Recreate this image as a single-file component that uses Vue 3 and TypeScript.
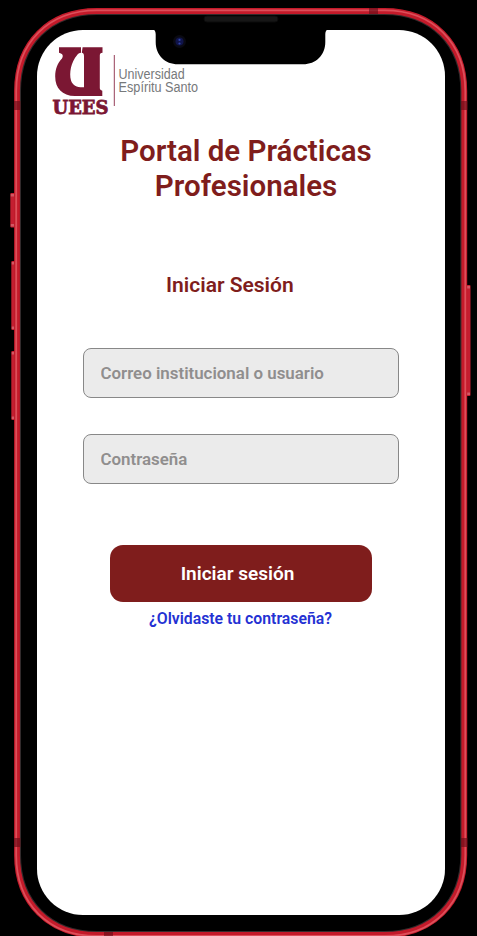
<script setup lang="ts">
import { ref } from 'vue'

interface Field {
  id: string
  type: string
  label: string
}

interface Box {
  x: number
  y: number
  w: number
  h: number
}

const fields: Field[] = [
  { id: 'user', type: 'text', label: 'Correo institucional o usuario' },
  { id: 'password', type: 'password', label: 'Contraseña' },
]

const values = ref<Record<string, string>>({ user: '', password: '' })

const buttons: Box[] = [
  { x: 10.3, y: 193, w: 5, h: 34.5 },
  { x: 11.3, y: 261, w: 4, h: 69 },
  { x: 11.3, y: 351, w: 4, h: 69 },
  { x: 466.5, y: 285, w: 4, h: 111 },
]

const bands: Box[] = [
  { x: 14, y: 101, w: 6.5, h: 9 },
  { x: 461, y: 101, w: 6.5, h: 9 },
  { x: 14, y: 838, w: 6.5, h: 9 },
  { x: 461, y: 838, w: 6.5, h: 9 },
  { x: 369, y: 8, w: 9, h: 6 },
  { x: 104, y: 932, w: 9, h: 6 },
]

// Rounded outline with continuous-curvature corners
function outline(l: number, t: number, r: number, b: number, s: number): string {
  const k = s * 0.4
  return [
    `M${l + s} ${t}H${r - s}`,
    `C${r - k} ${t} ${r} ${t + k} ${r} ${t + s}`,
    `V${b - s}`,
    `C${r} ${b - k} ${r - k} ${b} ${r - s} ${b}`,
    `H${l + s}`,
    `C${l + k} ${b} ${l} ${b - k} ${l} ${b - s}`,
    `V${t + s}`,
    `C${l} ${t + k} ${l + k} ${t} ${l + s} ${t}Z`,
  ].join('')
}
</script>

<template>
  <main class="stage">
    <svg class="device" viewBox="0 0 477 936" aria-hidden="true">
      <g v-for="(b, i) in buttons" :key="'k' + i">
        <rect class="key" :x="b.x" :y="b.y" :width="b.w" :height="b.h" rx="1" />
        <rect class="key-end" :x="b.x + 0.5" :y="b.y + 1" :width="b.w - 1" height="2.5" />
        <rect class="key-end" :x="b.x + 0.5" :y="b.y + b.h - 3.5" :width="b.w - 1" height="2.5" />
      </g>
      <path class="rim" :d="outline(17.8, 11.8, 463.5, 934.2, 79.2)" />
      <path class="band" :d="outline(17, 11, 464.3, 935, 80)" />
      <path class="shine" :d="outline(16.2, 10.3, 465.3, 936, 80.8)" />
      <rect v-for="(b, i) in bands" :key="'b' + i" class="antenna" :x="b.x" :y="b.y" :width="b.w" :height="b.h" />
    </svg>

    <section class="screen">
      <svg class="notch" viewBox="0 0 176 50" aria-hidden="true">
        <path d="M1 14.6C3 15 3.7 17 3.7 19.5V27C3.7 40 13 49.3 26 49.3H151C164 49.3 173.3 40 173.3 27V19.5C173.3 17 174 15 176 14.6V0H1Z" />
        <rect class="speaker" x="52" y="1" width="74" height="6" rx="3" />
        <circle class="lens-ring" cx="27.5" cy="26.5" r="6.5" />
        <circle class="lens" cx="27.5" cy="26.5" r="4" />
        <circle class="glint" cx="27.5" cy="24.9" r="1.1" />
        <circle class="glint" cx="27.5" cy="28.5" r="1.1" />
      </svg>

      <header class="brand">
        <svg class="logo" viewBox="0 0 150 76" role="img" aria-label="UEES">
          <path
            class="mark"
            d="M7 4.3H29V9.8C27 10 26.3 10.6 25.2 12C19 19 17 30 19 37.5C20.8 42.5 25 44.6 32 44.3V13C32 10.8 31 10 29.8 9.8L30.6 4.3H50.5V9.7C48.5 10 47.8 10.7 47.8 12.5V45C47.8 46.8 48.7 47.3 50.3 47.7V53H23C10 53 3.2 45 3.2 33.5C3.2 26 5.5 20 10 15.5C11.5 13 11 10.5 7 9.7Z"
          />
          <text class="acronym" x="0.5" y="71.2" textLength="56" lengthAdjust="spacingAndGlyphs">UEES</text>
          <rect class="rule" x="61.8" y="12" width="1" height="51" />
          <text class="uni" x="66.6" y="36.3" textLength="66" lengthAdjust="spacingAndGlyphs">Universidad</text>
          <text class="uni" x="66.6" y="48.8" textLength="79.5" lengthAdjust="spacingAndGlyphs">Espíritu Santo</text>
        </svg>
      </header>

      <h1 class="title">Portal de Prácticas Profesionales</h1>
      <h2 class="subtitle">Iniciar Sesión</h2>

      <form class="form" @submit.prevent>
        <input
          v-for="f in fields"
          :key="f.id"
          v-model="values[f.id]"
          class="field"
          :type="f.type"
          :placeholder="f.label"
          :aria-label="f.label"
        />
        <button class="submit" type="submit">Iniciar sesión</button>
      </form>
      <a class="forgot" href="#">¿Olvidaste tu contraseña?</a>
    </section>
  </main>
</template>

<style>
body {
  margin: 0;
  background: #000;
  overflow: hidden;
}
</style>

<style scoped>
.stage {
  position: relative;
  box-sizing: border-box;
  width: 477px;
  height: 936px;
  padding: 30px 32px 20px 37px;
  overflow: hidden;
  background: #000;
  font-family: Roboto, 'Liberation Sans', sans-serif;
}

.device {
  position: absolute;
  inset: 0;
  width: 477px;
  height: 936px;
}

.key {
  fill: #c41e30;
}

.key-end {
  fill: #d8707a;
  opacity: 0.7;
}

.rim,
.band,
.shine {
  fill: none;
}

.rim {
  stroke: #332b2c;
  stroke-width: 6.4;
}

.band {
  stroke: #c41a2a;
  stroke-width: 5.8;
}

.shine {
  stroke: #dc4f5a;
  stroke-width: 1.8;
}

.antenna {
  fill: #6a0c18;
  opacity: 0.65;
}

.screen {
  position: relative;
  box-sizing: border-box;
  display: flex;
  flex-direction: column;
  width: 408px;
  height: 885.4px;
  border-radius: 46px;
  background: #fff;
}

.notch {
  position: absolute;
  top: -15px;
  left: 115px;
  width: 176px;
  height: 50px;
}

.speaker {
  fill: #161616;
  stroke: #0b0b0b;
}

.lens-ring {
  fill: #0a0a12;
}

.lens {
  fill: #10144a;
}

.glint {
  fill: #3144a6;
}

.brand {
  display: flex;
  padding: 13px 0 0 15px;
}

.logo {
  width: 150px;
  height: 76px;
}

.mark {
  fill: #7b1733;
}

.acronym {
  fill: #7b1733;
  stroke: #7b1733;
  stroke-width: 0.8px;
  font: 700 18px 'DejaVu Serif', serif;
}

.rule {
  fill: #97405a;
}

.uni {
  fill: #77797b;
  font: 400 13.8px 'Liberation Sans', Arial, sans-serif;
}

.title {
  width: 270px;
  margin: 15px 0 0 74px;
  color: #7f1d1c;
  font-size: 29.5px;
  font-weight: 600;
  line-height: 35px;
  text-align: center;
}

.subtitle {
  margin: 69px 0 0 129px;
  color: #7f1d1c;
  font-size: 21px;
  font-weight: 600;
  line-height: 25px;
}

.form {
  display: flex;
  flex-direction: column;
  gap: 36px;
  width: 316px;
  margin: 50px 0 0 46px;
}

.field {
  box-sizing: border-box;
  width: 316px;
  height: 50px;
  padding: 0 16.5px;
  border: 1px solid #888;
  border-radius: 8px;
  outline: none;
  background: #ebebeb;
  color: #333;
  font: 600 16.9px Roboto, sans-serif;
}

.field::placeholder {
  color: #908e8e;
  opacity: 1;
}

.submit {
  width: 262px;
  height: 57px;
  margin: 25px 0 0 26.5px;
  padding: 0 6px 0 0;
  border: 0;
  border-radius: 13px;
  background: #7f1d1c;
  color: #fff;
  font: 600 19px Roboto, sans-serif;
}

.forgot {
  align-self: flex-start;
  margin: 7px 0 0 112px;
  color: #2431d3;
  font-size: 15.8px;
  font-weight: 600;
  line-height: 20px;
  text-decoration: none;
}
</style>
